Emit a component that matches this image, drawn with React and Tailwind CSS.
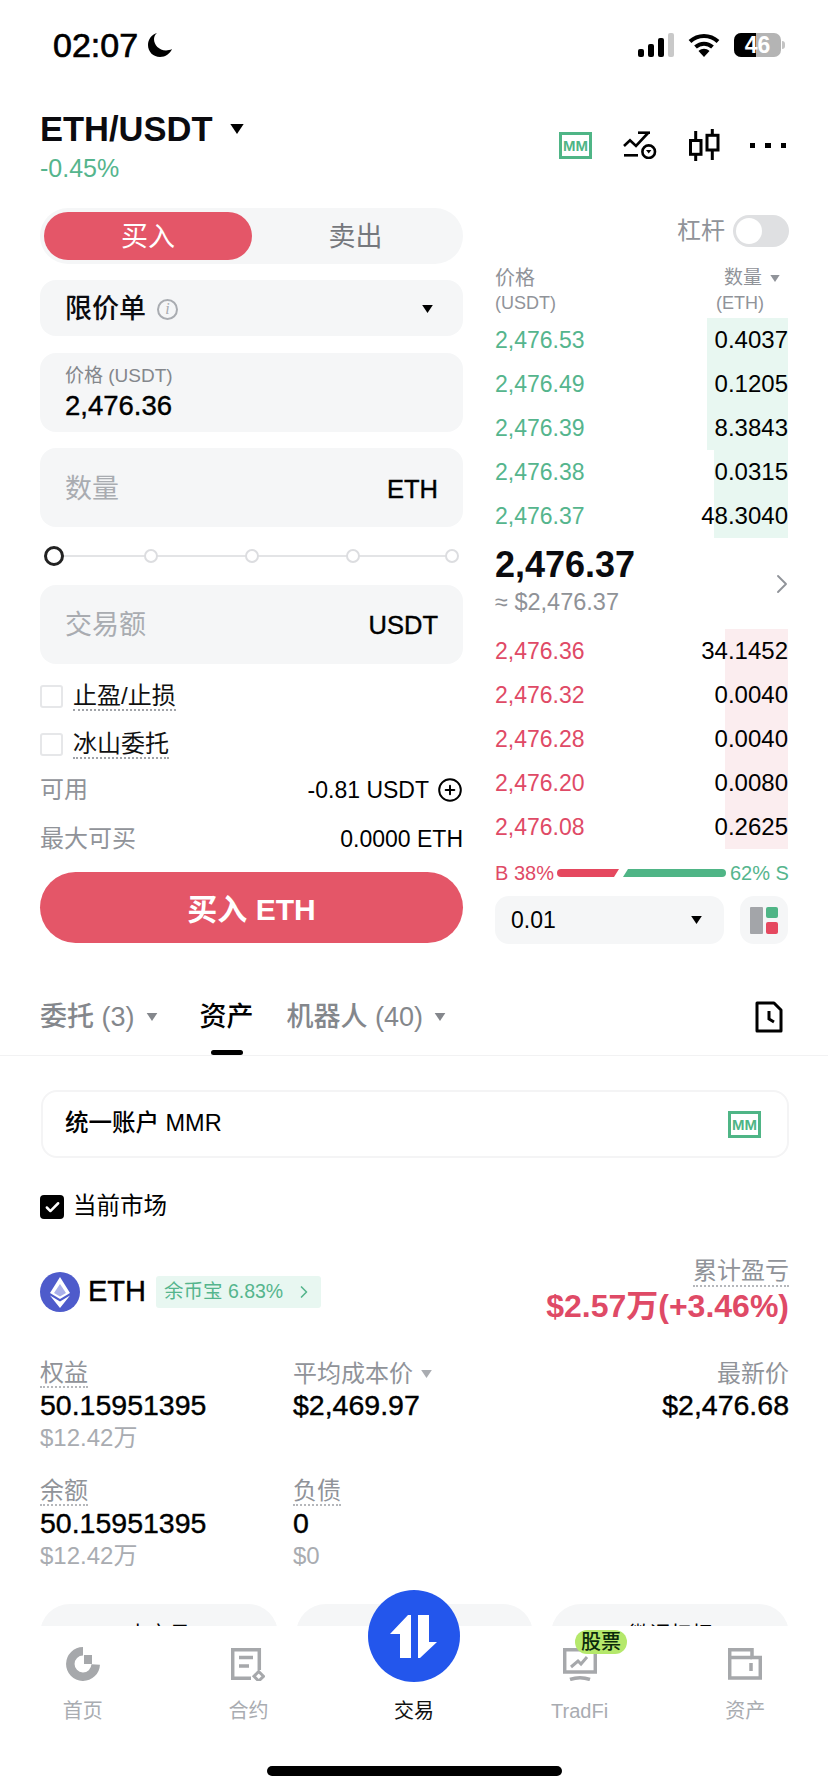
import { Check, ChevronRight, CirclePlus } from 'lucide-react';

const asks = [
  ['2,476.53', '0.4037', 'w-[81px]'],
  ['2,476.49', '0.1205', 'w-[81px]'],
  ['2,476.39', '8.3843', 'w-[81px]'],
  ['2,476.38', '0.0315', 'w-[74px]'],
  ['2,476.37', '48.3040', 'w-[74px]'],
];

const bids = [
  ['2,476.36', '34.1452'],
  ['2,476.32', '0.0040'],
  ['2,476.28', '0.0040'],
  ['2,476.20', '0.0080'],
  ['2,476.08', '0.2625'],
];

// Liberation has no medium weight, so numbers get a thin stroke instead
const medium = '[-webkit-text-stroke:0.4px_currentColor]';

// small filled triangle used by all the dropdowns
const Caret = ({ className }) => (
  <svg viewBox="0 0 12 9" className={className} fill="currentColor">
    <path d="M0 0H12L6 9Z" />
  </svg>
);

const MMBadge = () => (
  <div className="w-[33px] h-[27px] border-[3px] border-[#4fb586] flex items-center justify-center text-[15px] leading-none font-bold text-[#4fb586]">
    MM
  </div>
);

const StatusBar = () => (
  <div className="h-[90px] flex items-center justify-between pl-[53px] pr-[43px]">
    <div className="flex items-center gap-[9px]">
      <span className="text-[34px] text-black leading-none [-webkit-text-stroke:0.7px_currentColor]">02:07</span>
      <svg viewBox="0 0 26 26" className="w-[26px] h-[26px]" fill="#000">
        <path d="M10 1C4.500 2.500 1 7.500 1 13c0 7 5.500 12 12 12 5.500 0 10-3.500 12-8-2 1-4 1.400-6 1.400C12 18.400 7 13 7 7c0-2 1-4.500 3-6Z" />
      </svg>
    </div>
    <div className="flex items-center gap-[14px]">
      <svg viewBox="0 0 36 24" className="w-[36px] h-[24px]">
        <rect x="0" y="16" width="6" height="8" rx="2" fill="#000" />
        <rect x="10" y="11" width="6" height="13" rx="2" fill="#000" />
        <rect x="20" y="5" width="6" height="19" rx="2" fill="#000" />
        <rect x="30" y="0" width="6" height="24" rx="2" fill="#c9c9c9" />
      </svg>
      <svg viewBox="0 0 32 24" className="w-[32px] h-[24px]" fill="none" stroke="#000" strokeWidth="4">
        <path d="M2 8.500C10 1 22 1 30 8.500" />
        <path d="M7.500 14C12.500 9.500 19.500 9.500 24.500 14" />
        <path d="M16 24L10.500 18C14 15 18 15 21.500 18Z" fill="#000" stroke="none" />
      </svg>
      <div className="flex items-center gap-[1px]">
        <div className="relative w-[47px] h-[24px] rounded-[7px] bg-[#b4b4b4] flex items-center justify-center">
          <div className="absolute left-0 top-0 bottom-0 w-[22px] rounded-l-[7px] bg-black" />
          <span className="relative text-[23px] font-bold text-white leading-none">46</span>
        </div>
        <div className="w-[3px] h-[8px] rounded-r-full bg-[#c4c4c4]" />
      </div>
    </div>
  </div>
);

const Header = () => (
  <div className="mt-[16px] h-[78px] pl-[40px] pr-[42px] flex items-center justify-between">
    <div>
      <div className="h-[46px] flex items-center gap-[17px]">
        <span className="text-[34.500px] font-semibold text-[#0b0b0f] leading-none">ETH/USDT</span>
        <Caret className="w-[14px] h-[10px] text-black" />
      </div>
      <div className="h-[32px] flex items-center text-[25px] text-[#55b58d] leading-none">-0.45%</div>
    </div>
    <div className="flex items-center">
      <MMBadge />
      <svg viewBox="0 0 34 28" className="ml-[31px] w-[34px] h-[28px]" fill="none" stroke="#000" strokeWidth="2.600">
        <path d="M1 15L7 9.300L13 15L25 2" />
        <path d="M15 1.700H27" />
        <path d="M1 24.300H15" />
        <circle cx="25.700" cy="20.700" r="6.300" />
        <path d="M23 19H28.400L25.700 22.500Z" fill="#000" stroke="none" />
      </svg>
      <svg viewBox="0 0 31 32" className="ml-[32px] w-[31px] h-[32px]" fill="none" stroke="#000" strokeWidth="3">
        <path d="M6.700 2V11.500M6.700 25.300V32" />
        <rect x="1.500" y="11.500" width="10.500" height="13.800" />
        <path d="M23.300 0V6.300M23.300 21V31" />
        <rect x="18" y="6.300" width="11" height="14.700" />
      </svg>
      <div className="ml-[30px] flex items-center gap-[10px]">
        <div className="w-[5px] h-[5px] bg-black" />
        <div className="w-[6px] h-[5px] bg-black" />
        <div className="w-[5px] h-[5px] bg-black" />
      </div>
    </div>
  </div>
);

const AmountField = ({ label, unit, className }) => (
  <div className={`h-[79px] rounded-[16px] bg-[#f5f6f7] pl-[25px] pr-[25px] flex items-center justify-between ${className}`}>
    <span className="text-[27px] text-[#a9acb1]">{label}</span>
    <span className={`text-[25.500px] text-black ${medium}`}>{unit}</span>
  </div>
);

const CheckRow = ({ label, className }) => (
  <div className={`flex items-center h-[23px] ${className}`}>
    <div className="w-[23px] h-[23px] rounded-[3px] border-2 border-[#e6e7e9]" />
    <span className="ml-[10px] text-[24px] leading-[27px] text-[#111] border-b-2 border-dotted border-[#a0a3a8]">{label}</span>
  </div>
);

const SliderDot = ({ className }) => (
  <div className={`relative w-[14px] h-[14px] rounded-full border-2 border-[#dcdde0] bg-white ${className}`} />
);

const OrderForm = () => (
  <div className="w-[423px] shrink-0">
    <div className="h-[56px] rounded-full bg-[#f5f6f7] p-[4px] flex items-center">
      <div className="w-[208px] h-[48px] pt-[3px] rounded-full bg-[#e45668] flex items-center justify-center text-[27px] text-white">买入</div>
      <div className="flex-1 h-[48px] pt-[3px] flex items-center justify-center text-[27px] text-[#75787d]">卖出</div>
    </div>
    <div className="mt-[16px] h-[56px] pt-[2px] rounded-[16px] bg-[#f5f6f7] pl-[25px] pr-[30px] flex items-center justify-between">
      <div className="flex items-center gap-[11px]">
        <span className="text-[27px] font-medium text-[#0b0b0f]">限价单</span>
        <div className="w-[21px] h-[21px] rounded-full border-2 border-[#a9acb1] flex items-center justify-center text-[16px] italic leading-none text-[#a9acb1] font-['Liberation_Serif',serif]">i</div>
      </div>
      <Caret className="w-[11px] h-[8px] text-black" />
    </div>
    <div className="mt-[17px] h-[79px] rounded-[16px] bg-[#f5f6f7] pl-[25px] flex flex-col justify-center">
      <span className="text-[19px] leading-[26px] text-[#84878c]">价格 (USDT)</span>
      <span className={`text-[27.500px] leading-[33px] text-black ${medium}`}>2,476.36</span>
    </div>
    <AmountField label="数量" unit="ETH" className="mt-[16px] pt-[3px]" />
    <div className="relative h-[58px] pl-[4px] flex items-center">
      <div className="absolute left-[20px] right-[8px] top-[28px] h-[2px] bg-[#e3e4e6]" />
      <div className="relative w-[20px] h-[20px] rounded-full border-[3px] border-[#222] bg-white" />
      <SliderDot className="ml-[80px]" />
      <SliderDot className="ml-[87px]" />
      <SliderDot className="ml-[87px]" />
      <SliderDot className="ml-[85px]" />
    </div>
    <AmountField label="交易额" unit="USDT" className="pt-[1px]" />
    <CheckRow label="止盈/止损" className="mt-[21px]" />
    <CheckRow label="冰山委托" className="mt-[25px]" />
    <div className="mt-[19px] h-[30px] flex items-center justify-between">
      <span className="text-[24px] text-[#909399]">可用</span>
      <div className="flex items-center gap-[8px] text-[23px] text-black">
        -0.81 USDT
        <CirclePlus size={26} strokeWidth={1.8} color="#000" />
      </div>
    </div>
    <div className="mt-[19px] h-[30px] flex items-center justify-between">
      <span className="text-[24px] text-[#909399]">最大可买</span>
      <span className="text-[23px] text-black">0.0000 ETH</span>
    </div>
    <div className="mt-[18px] h-[71px] pt-[3px] rounded-full bg-[#e45668] flex items-center justify-center text-[30px] font-semibold text-white">买入 ETH</div>
  </div>
);

const OrderBook = () => (
  <div className="w-[295px] shrink-0">
    <div className="h-[46px] pr-[1px] flex items-center justify-end gap-[8px]">
      <span className="text-[24px] text-[#909399]">杠杆</span>
      <div className="w-[56px] h-[32px] rounded-full bg-[#dfe0e2] p-[3px]">
        <div className="w-[26px] h-[26px] rounded-full bg-white" />
      </div>
    </div>
    <div className="mt-[11px] pr-[10px] flex justify-between text-[#909399]">
      <div>
        <div className="text-[20px] leading-[26px]">价格</div>
        <div className="text-[18px] leading-[24px]">(USDT)</div>
      </div>
      <div className="flex flex-col items-end">
        <div className="flex items-center gap-[8px] text-[19px] leading-[26px]">
          数量
          <Caret className="w-[10px] h-[7px] text-[#909399]" />
        </div>
        <div className="mr-[16px] text-[18px] leading-[24px]">(ETH)</div>
      </div>
    </div>
    <div className="mt-[3px]">
      {asks.map(([price, size, bar]) => (
        <div key={price} className="relative h-[44px] pr-[2px] flex items-center justify-between">
          <div className={`absolute right-[2px] top-0 bottom-0 bg-[#e8f7f1] ${bar}`} />
          <span className="relative text-[23px] text-[#55b58d]">{price}</span>
          <span className="relative text-[24px] text-black">{size}</span>
        </div>
      ))}
    </div>
    <div className="h-[91px] flex justify-between">
      <div className="pt-[2px]">
        <div className="h-[50px] flex items-center text-[36px] font-bold text-[#0b0b0f] leading-none">2,476.37</div>
        <div className="h-[26px] flex items-center text-[23.500px] text-[#8f9297] leading-none">≈ $2,476.37</div>
      </div>
      <ChevronRight className="self-center -mr-[8px]" size={32} strokeWidth={1.4} color="#909399" />
    </div>
    <div>
      {bids.map(([price, size]) => (
        <div key={price} className="relative h-[44px] pr-[2px] flex items-center justify-between">
          <div className="absolute right-[2px] top-0 bottom-0 w-[63px] bg-[#fbedef]" />
          <span className="relative text-[23px] text-[#df4a66]">{price}</span>
          <span className="relative text-[24px] text-black">{size}</span>
        </div>
      ))}
    </div>
    <div className="mt-[8px] h-[32px] flex items-center text-[20px] leading-none">
      <span className="w-[62px] text-[#df4a66]">B 38%</span>
      <div className="w-[62px] h-[8px] rounded-l-full bg-[#e5485f] [clip-path:polygon(0_0,100%_0,calc(100%-5px)_100%,0_100%)]" />
      <div className="ml-[4px] w-[103px] h-[8px] rounded-r-full bg-[#4fb586] [clip-path:polygon(5px_0,100%_0,100%_100%,0_100%)]" />
      <span className="ml-[4px] text-[#55b58d]">62% S</span>
    </div>
    <div className="mt-[7px] flex items-center">
      <div className="w-[229px] h-[48px] rounded-[14px] bg-[#f5f6f7] pl-[16px] pr-[22px] flex items-center justify-between">
        <span className="text-[23px] text-black">0.01</span>
        <Caret className="w-[11px] h-[8px] text-black" />
      </div>
      <div className="ml-[16px] w-[48px] h-[48px] rounded-[14px] bg-[#f5f6f7] flex items-center justify-center gap-[3px]">
        <div className="w-[13px] h-[27px] rounded-[1px] bg-[#a3a5a9]" />
        <div className="flex flex-col gap-[4px]">
          <div className="w-[12px] h-[11.500px] rounded-[2px] bg-[#4fb586]" />
          <div className="w-[12px] h-[11.500px] rounded-[2px] bg-[#e5485f]" />
        </div>
      </div>
    </div>
  </div>
);

const Tabs = () => (
  <div className="mt-[49px] h-[63px] border-b border-[#f2f2f3] pl-[40px] pr-[45px] flex items-start justify-between">
    <div className="flex items-start">
      <div className="h-[48px] flex items-center gap-[11px] text-[27px] font-medium text-[#84878c]">
        委托 (3)
        <Caret className="w-[12px] h-[8px] text-[#84878c]" />
      </div>
      <div className="ml-[42px] flex flex-col items-center">
        <div className="h-[48px] flex items-center text-[27px] font-medium text-black">资产</div>
        <div className="mt-[9px] w-[32px] h-[5px] rounded-full bg-black" />
      </div>
      <div className="ml-[33px] h-[48px] flex items-center gap-[11px] text-[27px] font-medium text-[#84878c]">
        机器人 (40)
        <Caret className="w-[12px] h-[8px] text-[#84878c]" />
      </div>
    </div>
    <svg viewBox="0 0 28 32" className="mt-[8px] w-[28px] h-[32px]" fill="none" stroke="#000" strokeWidth="3">
      <path d="M2 2H19L26 9V30H2Z" strokeLinejoin="round" />
      <path d="M14 10V18L19 21" />
    </svg>
  </div>
);

const Stat = ({ label, value, sub, dotted, caret, className }) => (
  <div className={className}>
    <div className="h-[29px] flex items-center gap-[8px]">
      <span className={`text-[24px] leading-[27px] text-[#909399] ${dotted ? 'border-b-2 border-dotted border-[#b5b7bb]' : ''}`}>{label}</span>
      {caret && <Caret className="w-[11px] h-[8px] text-[#a9acb1]" />}
    </div>
    <div className={`h-[35px] flex items-center text-[28.500px] text-black leading-none ${medium}`}>{value}</div>
    {sub && <div className="mt-[2px] h-[26px] flex items-center text-[24px] text-[#a9acb1] leading-none">{sub}</div>}
  </div>
);

const Assets = () => (
  <div className="pl-[40px] pr-[39px]">
    <div className="mt-[34px] ml-[1px] h-[68px] rounded-[16px] border-2 border-[#f4f4f5] pl-[22px] pr-[26px] flex items-center justify-between">
      <span className="text-[23.500px] font-medium text-black">统一账户 MMR</span>
      <MMBadge />
    </div>
    <div className="mt-[37px] h-[24px] flex items-center gap-[9px]">
      <div className="w-[24px] h-[24px] rounded-[4px] bg-black flex items-center justify-center">
        <Check size={17} strokeWidth={3.5} color="#fff" />
      </div>
      <span className="text-[23.500px] text-black">当前市场</span>
    </div>
    <div className="mt-[38px] h-[69px] flex items-center justify-between">
      <div className="flex items-center">
        <svg viewBox="0 0 40 40" className="w-[40px] h-[40px]">
          <circle cx="20" cy="20" r="20" fill="#4e5bcb" />
          <path d="M20 5L30 21L20 27L10 21Z" fill="#fff" />
          <path d="M20 29.500L30 23.500L20 36L10 23.500Z" fill="#fff" />
          <path d="M20 12L26 21L20 24.500L14 21Z" fill="#aab0ea" />
        </svg>
        <span className={`ml-[8px] text-[29px] text-black leading-none ${medium}`}>ETH</span>
        <div className="ml-[10px] w-[165px] h-[32px] bg-[#e8f7f1] rounded-[3px] pl-[8px] flex items-center gap-[11px] text-[19.500px] text-[#55b58d]">
          余币宝 6.83%
          <ChevronRight size={20} strokeWidth={2} color="#55b58d" />
        </div>
      </div>
      <div className="self-start flex flex-col items-end">
        <span className="text-[24px] leading-[28px] text-[#909399] border-b-2 border-dotted border-[#b5b7bb]">累计盈亏</span>
        <span className="h-[37px] flex items-center text-[32px] font-bold text-[#df4a66] leading-none">$2.57万(+3.46%)</span>
      </div>
    </div>
    <div className="mt-[33px] flex">
      <Stat className="w-[253px]" label="权益" value="50.15951395" sub="$12.42万" dotted />
      <Stat className="flex-1" label="平均成本价" value="$2,469.97" caret />
      <div className="flex flex-col items-end">
        <div className="h-[29px] flex items-center text-[24px] text-[#909399]">最新价</div>
        <div className={`h-[35px] flex items-center text-[28.500px] text-black leading-none ${medium}`}>$2,476.68</div>
      </div>
    </div>
    <div className="mt-[26px] flex">
      <Stat className="w-[253px]" label="余额" value="50.15951395" sub="$12.42万" dotted />
      <Stat className="flex-1" label="负债" value="0" sub="$0" dotted />
    </div>
    <div className="mt-[35px] flex gap-[18px]">
      <div className="flex-1 h-[60px] rounded-t-[30px] bg-[#f5f6f7] flex items-center justify-center text-[21px] text-black">去交易</div>
      <div className="flex-1 h-[60px] rounded-t-[30px] bg-[#f5f6f7]" />
      <div className="flex-1 h-[60px] rounded-t-[30px] bg-[#f5f6f7] flex items-center justify-center text-[21px] text-black">微调杠杆</div>
    </div>
  </div>
);

const NavItem = ({ label, active, children }) => (
  <div className="flex flex-col items-center">
    <div className="h-[34px] mt-[21px] flex items-center justify-center">{children}</div>
    <span className={`mt-[15px] text-[20px] leading-[30px] ${active ? 'text-[#111]' : 'text-[#a9acb1]'}`}>{label}</span>
  </div>
);

const BottomNav = () => (
  <div className="absolute left-0 right-0 bottom-0 h-[166px] bg-white">
    <div className="grid grid-cols-5">
      <NavItem label="首页">
        <svg viewBox="0 0 34 34" className="w-[34px] h-[34px]" fill="none" stroke="#a6a8ab" strokeWidth="8.500">
          <path d="M17 4.300A12.700 12.700 0 1 0 29.700 17.500" />
          <rect x="18" y="8" width="8" height="9" fill="#a6a8ab" stroke="none" />
        </svg>
      </NavItem>
      <NavItem label="合约">
        <svg viewBox="0 0 34 33" className="w-[34px] h-[33px]" fill="none" stroke="#a6a8ab" strokeWidth="3.500">
          <path d="M28.300 22V1.700H1.700V30.300H20" />
          <path d="M8 9.500H22M8 18H18" />
          <path d="M27.700 23.500L32.500 28.300L27.700 33L23 28.300Z" strokeWidth="3" />
        </svg>
      </NavItem>
      <NavItem label="交易" active />
      <NavItem label="TradFi">
        <svg viewBox="0 0 34 33" className="w-[34px] h-[33px]" fill="none" stroke="#a6a8ab" strokeWidth="3.500">
          <path d="M1.700 24V1.700H32.300V24Z" />
          <path d="M7 31.500Q17 28 27 31.500" />
          <path d="M8 19L15 13L18 16L24 9" strokeWidth="3" />
        </svg>
      </NavItem>
      <NavItem label="资产">
        <svg viewBox="0 0 34 32" className="w-[34px] h-[32px]" fill="none" stroke="#a6a8ab" strokeWidth="3.500">
          <path d="M1.700 30V1.700H24V9.500H32.300V30Z" />
          <path d="M1.700 9.500H24M23 15V23" />
        </svg>
      </NavItem>
    </div>
    <div className="absolute left-[368px] top-[-36px] w-[92px] h-[92px] rounded-full bg-[#2356ec]">
      <svg viewBox="0 0 92 92" className="w-[92px] h-[92px]" fill="#fff">
        <path d="M43 25V68H32V44H22L40 25Z" />
        <path d="M50 25H61V52H69L52 68H50Z" />
      </svg>
    </div>
    <div className="absolute left-[575px] top-[4px] w-[52px] h-[24px] rounded-full bg-[#b5e86b] flex items-center justify-center text-[20px] font-medium leading-none text-[#0b2a0b]">股票</div>
    <div className="absolute left-[267px] top-[140px] w-[295px] h-[10px] rounded-full bg-black" />
  </div>
);

export default function App() {
  return (
    <div className="relative w-[828px] h-[1792px] overflow-hidden bg-white font-['Liberation_Sans','Noto_Sans_CJK_SC',sans-serif]">
      <StatusBar />
      <Header />
      <div className="mt-[24px] pl-[40px] flex gap-[32px]">
        <OrderForm />
        <OrderBook />
      </div>
      <Tabs />
      <Assets />
      <BottomNav />
    </div>
  );
}
